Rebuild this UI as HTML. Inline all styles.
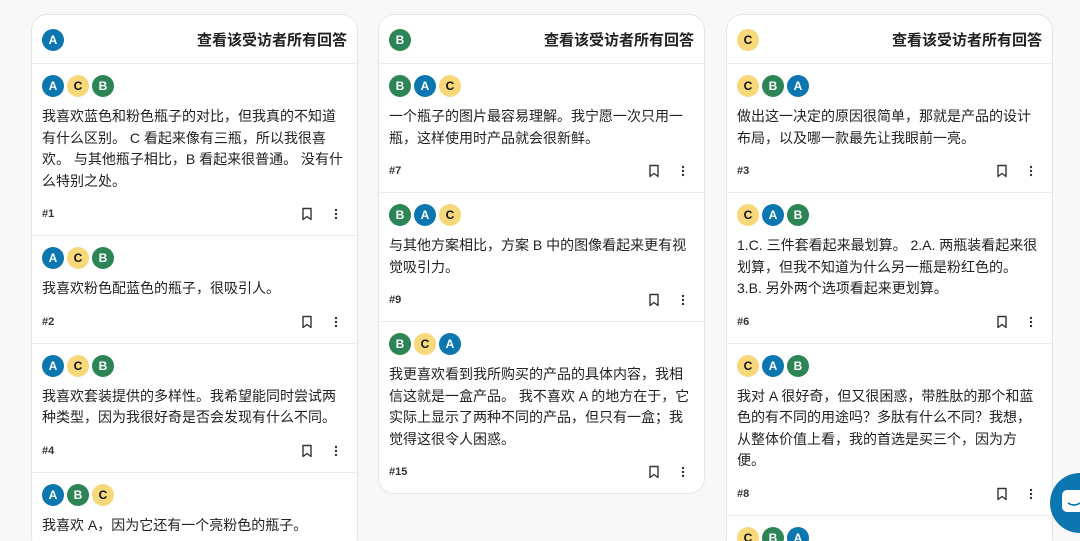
<!DOCTYPE html>
<html><head><meta charset="utf-8"><style>
*{box-sizing:border-box;margin:0;padding:0}
html,body{width:1080px;height:541px;overflow:hidden}
body{background:#f8f8f8;font-family:"Liberation Sans","Noto Sans CJK SC",sans-serif;color:#222;position:relative}
.card{position:absolute;top:14px;width:327px;background:#fff;border:1px solid #e6e6e6;border-radius:16px;overflow:hidden}
.hd{height:49px;border-bottom:1px solid #ececec;display:flex;align-items:center;justify-content:space-between;padding:0 10px 0 10px}
.hd b{font-size:15px;font-weight:700;color:#222}
.it{border-bottom:1px solid #ececec;padding:10px 7px 9px 10px}
.bd{display:flex;gap:3px;height:24px}
.c{width:22px;height:22px;border-radius:50%;display:flex;align-items:center;justify-content:center;font-size:12px;font-weight:700;color:#fff;margin-top:1px}
.A{background:#0b76b0}.B{background:#2d8455}.C{background:#f7d97c;color:#111}
.tx{margin-top:8px;font-size:14px;line-height:21.5px;color:#222;padding-right:4px}
.ft{margin-top:10px;height:24px;display:flex;align-items:center;font-size:11px;font-weight:700;color:#333}
.ft span{flex:1}
.ic{width:29px;display:flex;justify-content:center}
</style></head><body>
<svg width="0" height="0" style="position:absolute"><defs>
<symbol id="bm" viewBox="0 0 12 14"><path d="M2 1.5h8v11l-4-3-4 3z" fill="none" stroke="#333" stroke-width="1.4" stroke-linejoin="round"/></symbol>
<symbol id="dt" viewBox="0 0 4 14"><circle cx="2" cy="3" r="1.2" fill="#333"/><circle cx="2" cy="7" r="1.2" fill="#333"/><circle cx="2" cy="11" r="1.2" fill="#333"/></symbol>
</defs></svg>

<div class="card" style="left:31px;height:540px">
<div class="hd"><div class="c A">A</div><b>查看该受访者所有回答</b></div>
<div class="it"><div class="bd"><div class="c A">A</div><div class="c C">C</div><div class="c B">B</div></div>
<div class="tx">我喜欢蓝色和粉色瓶子的对比，但我真的不知道有什么区别。 C 看起来像有三瓶，所以我很喜欢。 与其他瓶子相比，B 看起来很普通。 没有什么特别之处。</div>
<div class="ft"><span>#1</span><div class="ic"><svg width="12" height="14"><use href="#bm"/></svg></div><div class="ic"><svg width="4" height="14"><use href="#dt"/></svg></div></div></div>
<div class="it"><div class="bd"><div class="c A">A</div><div class="c C">C</div><div class="c B">B</div></div>
<div class="tx">我喜欢粉色配蓝色的瓶子，很吸引人。</div>
<div class="ft"><span>#2</span><div class="ic"><svg width="12" height="14"><use href="#bm"/></svg></div><div class="ic"><svg width="4" height="14"><use href="#dt"/></svg></div></div></div>
<div class="it"><div class="bd"><div class="c A">A</div><div class="c C">C</div><div class="c B">B</div></div>
<div class="tx">我喜欢套装提供的多样性。我希望能同时尝试两种类型，因为我很好奇是否会发现有什么不同。</div>
<div class="ft"><span>#4</span><div class="ic"><svg width="12" height="14"><use href="#bm"/></svg></div><div class="ic"><svg width="4" height="14"><use href="#dt"/></svg></div></div></div>
<div class="it"><div class="bd"><div class="c A">A</div><div class="c B">B</div><div class="c C">C</div></div>
<div class="tx">我喜欢 A，因为它还有一个亮粉色的瓶子。</div></div>
</div>

<div class="card" style="left:378px">
<div class="hd"><div class="c B">B</div><b>查看该受访者所有回答</b></div>
<div class="it"><div class="bd"><div class="c B">B</div><div class="c A">A</div><div class="c C">C</div></div>
<div class="tx">一个瓶子的图片最容易理解。我宁愿一次只用一瓶，这样使用时产品就会很新鲜。</div>
<div class="ft"><span>#7</span><div class="ic"><svg width="12" height="14"><use href="#bm"/></svg></div><div class="ic"><svg width="4" height="14"><use href="#dt"/></svg></div></div></div>
<div class="it"><div class="bd"><div class="c B">B</div><div class="c A">A</div><div class="c C">C</div></div>
<div class="tx">与其他方案相比，方案 B 中的图像看起来更有视觉吸引力。</div>
<div class="ft"><span>#9</span><div class="ic"><svg width="12" height="14"><use href="#bm"/></svg></div><div class="ic"><svg width="4" height="14"><use href="#dt"/></svg></div></div></div>
<div class="it" style="border-bottom:none"><div class="bd"><div class="c B">B</div><div class="c C">C</div><div class="c A">A</div></div>
<div class="tx">我更喜欢看到我所购买的产品的具体内容，我相信这就是一盒产品。 我不喜欢 A 的地方在于，它实际上显示了两种不同的产品，但只有一盒；我觉得这很令人困惑。</div>
<div class="ft"><span>#15</span><div class="ic"><svg width="12" height="14"><use href="#bm"/></svg></div><div class="ic"><svg width="4" height="14"><use href="#dt"/></svg></div></div></div>
</div>

<div class="card" style="left:726px;height:540px">
<div class="hd"><div class="c C">C</div><b>查看该受访者所有回答</b></div>
<div class="it"><div class="bd"><div class="c C">C</div><div class="c B">B</div><div class="c A">A</div></div>
<div class="tx">做出这一决定的原因很简单，那就是产品的设计布局，以及哪一款最先让我眼前一亮。</div>
<div class="ft"><span>#3</span><div class="ic"><svg width="12" height="14"><use href="#bm"/></svg></div><div class="ic"><svg width="4" height="14"><use href="#dt"/></svg></div></div></div>
<div class="it"><div class="bd"><div class="c C">C</div><div class="c A">A</div><div class="c B">B</div></div>
<div class="tx">1.C. 三件套看起来最划算。 2.A. 两瓶装看起来很划算，但我不知道为什么另一瓶是粉红色的。 3.B. 另外两个选项看起来更划算。</div>
<div class="ft"><span>#6</span><div class="ic"><svg width="12" height="14"><use href="#bm"/></svg></div><div class="ic"><svg width="4" height="14"><use href="#dt"/></svg></div></div></div>
<div class="it"><div class="bd"><div class="c C">C</div><div class="c A">A</div><div class="c B">B</div></div>
<div class="tx">我对 A 很好奇，但又很困惑，带胜肽的那个和蓝色的有不同的用途吗？多肽有什么不同？我想，从整体价值上看，我的首选是买三个，因为方便。</div>
<div class="ft"><span>#8</span><div class="ic"><svg width="12" height="14"><use href="#bm"/></svg></div><div class="ic"><svg width="4" height="14"><use href="#dt"/></svg></div></div></div>
<div class="it"><div class="bd"><div class="c C">C</div><div class="c B">B</div><div class="c A">A</div></div></div>
</div>

<div style="position:absolute;left:1050px;top:473px;width:60px;height:60px;border-radius:50%;background:#0b76b0"><svg width="30" height="30" style="position:absolute;left:10px;top:15px" viewBox="0 0 30 30"><rect x="2" y="2" width="24" height="22" rx="5" fill="#fff"/><path d="M8 15q6 4 12 0" stroke="#0b76b0" stroke-width="1.6" fill="none"/></svg></div>
</body></html>
